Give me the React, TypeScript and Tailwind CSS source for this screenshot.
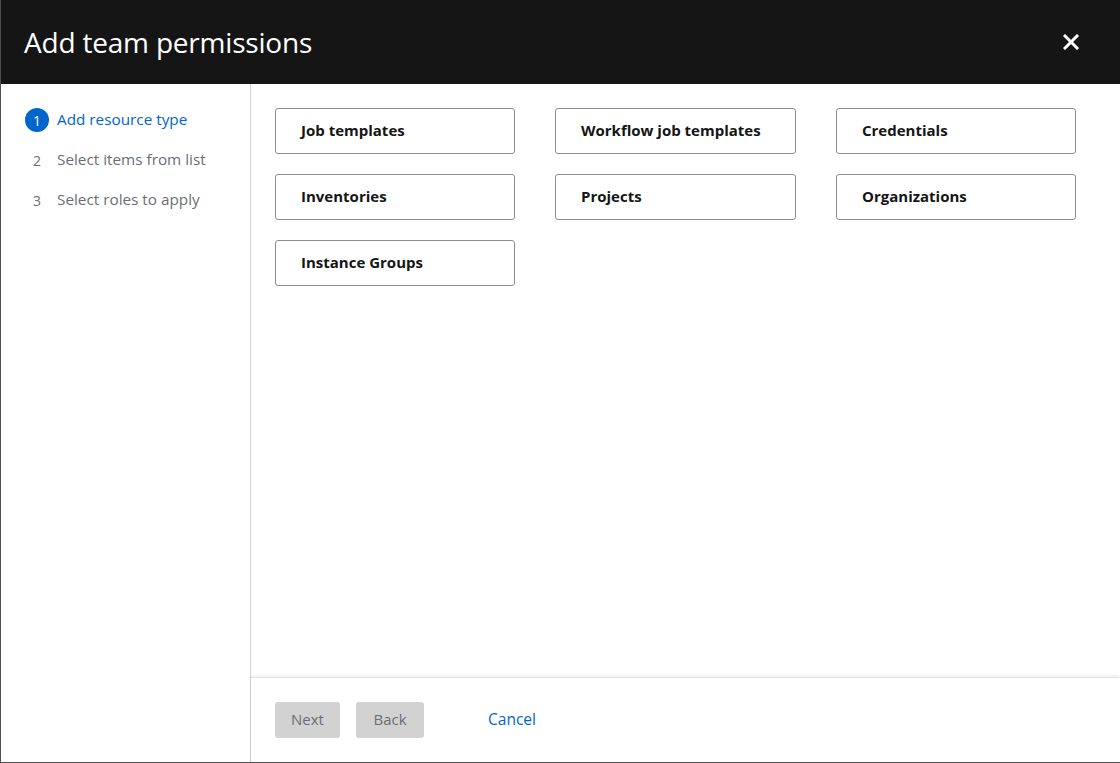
import { useState } from "react";

const resources = [
  "Job templates",
  "Workflow job templates",
  "Credentials",
  "Inventories",
  "Projects",
  "Organizations",
  "Instance Groups",
];

const steps = ["Add resource type", "Select items from list", "Select roles to apply"];

export default function App() {
  const [active] = useState(0);

  return (
    <div
      className="w-[1120px] h-[763px] flex flex-col bg-white border-l border-b border-[#4f4f4f] overflow-hidden"
      style={{ fontFamily: '"Open Sans", "Liberation Sans", sans-serif' }}
    >
      {/* Header */}
      <div className="h-[84px] shrink-0 bg-[#151515] flex items-center justify-between pl-6 pr-[41px] -ml-px">
        <h1 className="text-white text-[28px] tracking-[-0.2px] font-normal pb-[1px]">Add team permissions</h1>
        <button className="text-white">
          <svg width="16" height="16" viewBox="0 0 16 16">
            <path d="M2 2 L14 14 M14 2 L2 14" stroke="white" strokeWidth="3" strokeLinecap="square" />
          </svg>
        </button>
      </div>

      <div className="flex flex-1 min-h-0">
        {/* Steps */}
        <nav className="w-[250px] shrink-0 border-r border-[#d2d2d2] pt-6 pl-6">
          <ol className="flex flex-col gap-4">
            {steps.map((s, i) => (
              <li key={s} className="flex items-center gap-2 h-6">
                <span
                  className={`w-6 h-6 rounded-full flex items-center justify-center text-[14px] ${
                    i === active ? "bg-[#0066cc] text-white" : "text-[#6a6e73]"
                  }`}
                >
                  {i + 1}
                </span>
                <span className={`text-[15.3px] pb-[2px] ${i === active ? "text-[#0066cc]" : "text-[#6a6e73]"}`}>{s}</span>
              </li>
            ))}
          </ol>
        </nav>

        {/* Main */}
        <div className="flex-1 flex flex-col min-w-0">
          <div className="flex-1 pt-6 pl-6 pr-[43px]">
            <div className="grid grid-cols-[240px_241px_240px] gap-x-10 gap-y-5">
              {resources.map((r) => (
                <button
                  key={r}
                  className="h-[46px] border border-[#8a8d90] rounded-[3px] text-left pl-[25px] pb-[2px] text-[15px] font-bold text-[#151515]"
                >
                  {r}
                </button>
              ))}
            </div>
          </div>
          <div className="h-[85px] shrink-0 border-t border-[#e5e5e5] shadow-[0_-2px_3px_rgba(0,0,0,0.06)] flex items-center pl-6">
            <button className="h-9 w-[65px] rounded-[3px] bg-[#d2d2d2] text-[#6a6e73] text-[15px] pb-[1px]">Next</button>
            <button className="h-9 w-[68px] rounded-[3px] bg-[#d2d2d2] text-[#6a6e73] text-[15px] pb-[1px] ml-4">Back</button>
            <button className="h-9 px-4 text-[#0066cc] text-[15.5px] pb-[1px] ml-12">Cancel</button>
          </div>
        </div>
      </div>
    </div>
  );
}
